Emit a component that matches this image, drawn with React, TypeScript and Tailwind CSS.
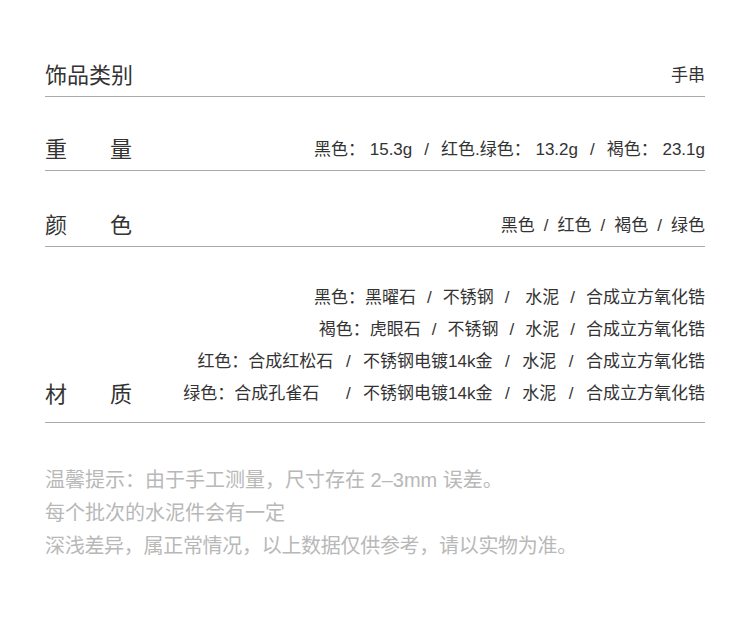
const font = { fontFamily: '"Liberation Sans", "Noto Sans CJK SC", sans-serif' };

function Slashed({ parts, sep }: { parts: string[]; sep: string }) {
  return (
    <span className="whitespace-pre">
      {parts.map((p, i) => (
        <span key={i}>
          {i > 0 && <span className={sep}>/</span>}
          {p}
        </span>
      ))}
    </span>
  );
}

const materials = [
  { parts: ["黑色：黑曜石", "不锈钢", " 水泥", "合成立方氧化锆"], sep: "mx-[11px]" },
  { parts: ["褐色：虎眼石", "不锈钢", "水泥", "合成立方氧化锆"], sep: "mx-[11px]" },
  { parts: ["红色：合成红松石", "不锈钢电镀14k金", "水泥", "合成立方氧化锆"], sep: "mx-[12.5px]" },
  { parts: ["绿色：合成孔雀石   ", "不锈钢电镀14k金", "水泥", "合成立方氧化锆"], sep: "mx-[12.5px]" },
];

function Label({ a, b }: { a: string; b: string }) {
  return (
    <div className="flex w-[87px] justify-between text-[22px] leading-[30px] text-[#333]">
      <span>{a}</span>
      <span>{b}</span>
    </div>
  );
}

export default function App() {
  return (
    <div className="min-h-[643px] w-[750px] bg-white px-[45px]" style={font}>
      <div className="flex items-end justify-between border-b border-[#a9a9a9] pt-[61px] pb-[5px]">
        <span className="text-[22px] leading-[30px] text-[#333]">饰品类别</span>
        <span className="text-[17px] leading-[30px] text-[#333]">手串</span>
      </div>

      <div className="flex items-end justify-between border-b border-[#a9a9a9] pt-[38px] pb-[5px]">
        <Label a="重" b="量" />
        <span className="text-[17px] leading-[30px] text-[#333]">
          <Slashed parts={["黑色： 15.3g", "红色.绿色： 13.2g", "褐色： 23.1g"]} sep="mx-[12px]" />
        </span>
      </div>

      <div className="flex items-end justify-between border-b border-[#a9a9a9] pt-[40px] pb-[5px]">
        <Label a="颜" b="色" />
        <span className="text-[17px] leading-[30px] text-[#333]">
          <Slashed parts={["黑色", "红色", "褐色", "绿色"]} sep="mx-[9px]" />
        </span>
      </div>

      <div className="flex items-end justify-between border-b border-[#a9a9a9] pt-[35px] pb-[12px]">
        <Label a="材" b="质" />
        <div className="flex flex-col items-end text-[17px] leading-[32px] text-[#333]">
          {materials.map((m, i) => (
            <Slashed key={i} parts={m.parts} sep={m.sep} />
          ))}
        </div>
      </div>

      <div className="pt-[41px] text-[20px] leading-[33px] text-[#b8b8b8]">
        <p>温馨提示：由于手工测量，尺寸存在 2–3mm 误差。</p>
        <p>每个批次的水泥件会有一定</p>
        <p className="tracking-[-0.3px]">深浅差异，属正常情况，以上数据仅供参考，请以实物为准。</p>
      </div>
    </div>
  );
}
